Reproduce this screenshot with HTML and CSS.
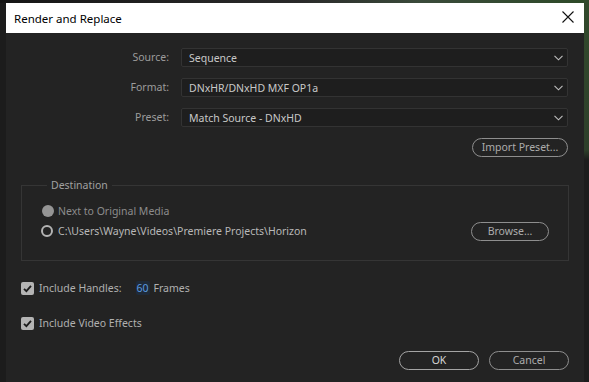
FILE: index.html
```html
<!DOCTYPE html>
<html lang="en">
<head>
    <meta charset="UTF-8">
    <title>Render and Replace</title>
    <link rel="stylesheet" href="styles.css">
</head>
<body>
    <div class="dialog">
        <div class="title-bar">
            <span class="title">Render and Replace</span>
            <svg class="close" width="12" height="12" viewBox="0 0 12 12">
                <path d="M0.5 0.5 L11.5 11.5 M11.5 0.5 L0.5 11.5" stroke="#111" stroke-width="1.1" fill="none"/>
            </svg>
        </div>

        <div class="content">
            <div class="settings">
                <label class="field-label">Source:</label>
                <div class="select"><span>Sequence</span><svg class="chevron" width="9" height="6" viewBox="0 0 9 6"><path d="M0.5 0.8 L4.5 4.8 L8.5 0.8" stroke="#c0c0c0" stroke-width="1.1" fill="none"/></svg></div>

                <label class="field-label">Format:</label>
                <div class="select"><span>DNxHR/DNxHD MXF OP1a</span><svg class="chevron" width="9" height="6" viewBox="0 0 9 6"><path d="M0.5 0.8 L4.5 4.8 L8.5 0.8" stroke="#c0c0c0" stroke-width="1.1" fill="none"/></svg></div>

                <label class="field-label">Preset:</label>
                <div class="select"><span>Match Source - DNxHD</span><svg class="chevron" width="9" height="6" viewBox="0 0 9 6"><path d="M0.5 0.8 L4.5 4.8 L8.5 0.8" stroke="#c0c0c0" stroke-width="1.1" fill="none"/></svg></div>
            </div>

            <div class="import-row">
                <button class="pill import-btn">Import Preset...</button>
            </div>

            <fieldset class="destination">
                <legend>Destination</legend>
                <div class="radio-row disabled">
                    <span class="radio filled"></span>
                    <span>Next to Original Media</span>
                </div>
                <div class="radio-row path-row">
                    <span class="radio ring"></span>
                    <span class="path">C:\Users\Wayne\Videos\Premiere Projects\Horizon</span>
                    <button class="pill browse-btn">Browse...</button>
                </div>
            </fieldset>

            <div class="check-row handles">
                <span class="checkbox"><svg width="13" height="13" viewBox="0 0 13 13"><path d="M3 6.8 L5.4 9.2 L10 3.8" stroke="#1c1c1c" stroke-width="1.8" fill="none"/></svg></span>
                <span>Include Handles:</span>
                <span class="frames-value">60</span>
                <span>Frames</span>
            </div>

            <div class="check-row effects">
                <span class="checkbox"><svg width="13" height="13" viewBox="0 0 13 13"><path d="M3 6.8 L5.4 9.2 L10 3.8" stroke="#1c1c1c" stroke-width="1.8" fill="none"/></svg></span>
                <span>Include Video Effects</span>
            </div>

            <div class="actions">
                <button class="pill action-btn ok">OK</button>
                <button class="pill action-btn">Cancel</button>
            </div>
        </div>
    </div>
</body>
</html>
```

FILE: styles.css
```css
body {
    margin: 0;
    padding: 3px 5px 0 6px;
    height: 382px;
    box-sizing: border-box;
    overflow: hidden;
    font-family: "Noto Sans", "Open Sans", sans-serif;
    font-size: 10.5px;
    background:
        linear-gradient(to bottom, #324a2c 0, #2d3f2a 150px, #1c1c1c 160px) right top / 5px 100% no-repeat,
        linear-gradient(to right, #161616 0, #2a2a2a 300px, #3a4a3a 420px, #2d4a28 589px) left top / 100% 3px no-repeat,
        #1c1c1c;
}

.dialog {
    width: 578px;
    height: 379px;
    background-color: #232323;
    display: flex;
    flex-direction: column;
}

.title-bar {
    height: 30px;
    background-color: #ffffff;
    display: flex;
    align-items: center;
    justify-content: space-between;
    padding: 0 10px 0 8px;
}

.title {
    font-size: 11.5px;
    color: #000000;
}

.close {
    margin-top: -2px;
}

.content {
    padding: 15px 15px 0 15px;
    display: flex;
    flex-direction: column;
}

.settings {
    display: grid;
    grid-template-columns: 148px 387px;
    column-gap: 12px;
    row-gap: 11px;
}

.field-label {
    text-align: right;
    color: #9c9c9c;
    line-height: 19px;
}

.select {
    height: 19px;
    box-sizing: border-box;
    background-color: #1e1e1e;
    border: 1px solid #333333;
    border-radius: 2px;
    display: flex;
    align-items: center;
    justify-content: space-between;
    padding: 0 4px 0 7px;
    color: #c8c8c8;
}

.chevron {
    margin-top: 1px;
}

.import-row {
    display: flex;
    justify-content: flex-end;
    margin-top: 11px;
    padding-right: 1px;
}

.pill {
    font-family: "Noto Sans", "Open Sans", sans-serif;
    font-size: 10.5px;
    height: 19px;
    box-sizing: border-box;
    background-color: #232323;
    border: 1px solid #8e8e8e;
    border-radius: 10px;
    color: #acacac;
    padding: 0;
    line-height: 17px;
}

.import-btn {
    width: 96px;
}

.destination {
    margin: 21px 0 0 0;
    padding: 8px 19px 19px 19px;
    border: 1px solid #353535;
    width: 548px;
    box-sizing: border-box;
}

.destination legend {
    color: #a0a0a0;
    padding: 0 4px;
    margin-left: 6px;
    line-height: 15px;
}

.radio-row {
    display: flex;
    align-items: center;
    height: 20px;
    color: #b8b8b8;
}

.radio-row.disabled {
    color: #8c8c8c;
}

.radio {
    width: 12px;
    height: 12px;
    border-radius: 50%;
    box-sizing: border-box;
    margin-right: 5px;
    flex-shrink: 0;
}

.radio.filled {
    background-color: #959595;
    margin-left: 1px;
    margin-right: 4px;
}

.radio.ring {
    border: 2px solid #b4b4b4;
}

.path {
    flex: 1;
}

.browse-btn {
    width: 78px;
}

.check-row {
    display: flex;
    align-items: center;
    color: #b0b0b0;
    height: 14px;
}

.handles {
    margin-top: 20px;
}

.effects {
    margin-top: 21px;
}

.checkbox {
    width: 13px;
    height: 13px;
    background-color: #b4b4b4;
    border-radius: 2px;
    margin-right: 5px;
    display: flex;
}

.frames-value {
    color: #5b9be0;
    background-color: #1f2a38;
    border-radius: 2px;
    margin-left: 14px;
    margin-right: 4px;
    padding: 0 1px;
}

.actions {
    display: flex;
    justify-content: flex-end;
    gap: 10px;
    margin-top: 21px;
}

.action-btn {
    width: 80px;
}

.ok {
    color: #d4d4d4;
    border-color: #a4a4a4;
}
```
